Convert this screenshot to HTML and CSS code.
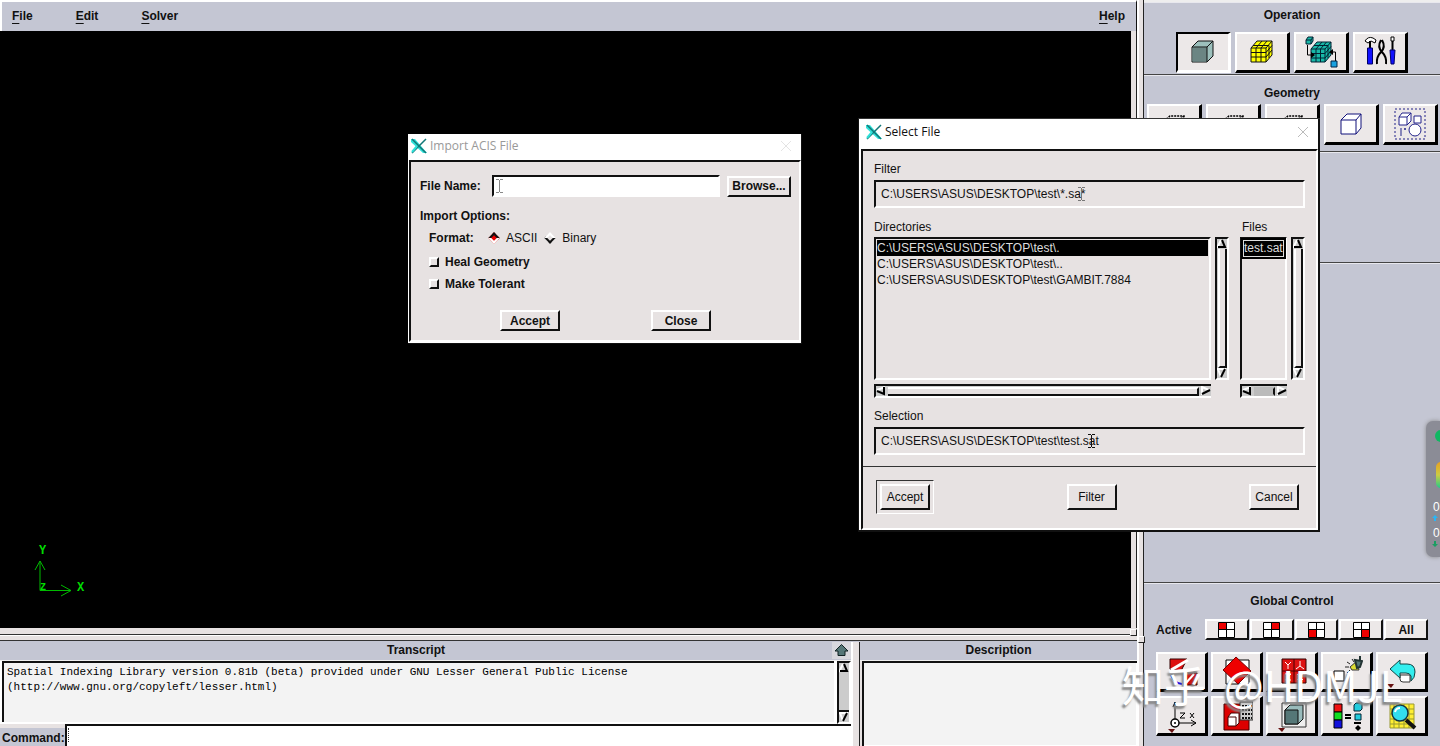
FILE: index.html
```
<!DOCTYPE html>
<html lang="en">
<head>
<meta charset="utf-8">
<title>GAMBIT</title>
<link rel="stylesheet" href="styles.css">
</head>
<body>
<svg class="defs" aria-hidden="true">
  <symbol id="up" viewBox="0 0 10 10"><path d="M0 9 4 1" stroke="#fff" stroke-width="2"/><path d="M5 1 8 8H1" fill="none" stroke="#000" stroke-width="2"/></symbol>
  <symbol id="down" viewBox="0 0 10 10"><path d="M0 1h9M1 1l3 8" fill="none" stroke="#fff" stroke-width="2"/><path d="M8 1 4 9" stroke="#000" stroke-width="2"/></symbol>
  <symbol id="left" viewBox="0 0 10 10"><path d="M9 1 1 4" stroke="#fff" stroke-width="2"/><path d="M8 1v7L1 5" fill="none" stroke="#000" stroke-width="2"/></symbol>
  <symbol id="right" viewBox="0 0 10 10"><path d="M1 9V1l7 3" fill="none" stroke="#fff" stroke-width="2"/><path d="M1 8 9 4" stroke="#000" stroke-width="2"/></symbol>
  <symbol id="logo" viewBox="0 0 16 16"><path d="M0 1h4l12 14h-4L0 4z" fill="#2fe0d8"/><path d="M1 1 15 15M15 1 1 15" stroke="#177" stroke-width="1.500"/><path d="M6 8 1 14" stroke="#2fe0d8" stroke-width="2"/></symbol>
  <symbol id="close" viewBox="0 0 10 10"><path d="m0 0 10 10M10 0 0 10" stroke="currentColor"/></symbol>
  <symbol id="beam" viewBox="0 0 7 14"><path d="M0 .5h3M4 .5h3M0 13.500h3M4 13.500h3M3.500 1v12" stroke="currentColor" fill="none"/></symbol>
  <symbol id="dashcube" viewBox="0 0 28 28"><path d="M4 11v14h14V11zl6-5h14v14l-6 5M18 11l6-5" fill="none" stroke="#000" stroke-width="1.500" stroke-dasharray="2 1"/></symbol>
  <symbol id="gridcube" viewBox="0 0 28 28"><path d="M3 10 9 3h15v14l-6 7H3z" stroke="#111"/><path d="M3 10h15v14M18 10l6-7M3 14.500h15l6-7M3 19h15l6-7M8 24V10l6-7M13 24V10l6-7M5 7.500h16V20" fill="none" stroke="#111"/></symbol>
</svg>
<div class="app">
  <main class="work">
    <nav class="menu" aria-label="Main menu">
      <button><u>F</u>ile</button><button><u>E</u>dit</button><button><u>S</u>olver</button><button class="help"><u>H</u>elp</button>
    </nav>
    <section class="view" aria-label="Graphics window">
      <div class="canvas">
        <svg class="axes" viewBox="0 0 60 56" aria-label="Axes">
          <path d="M8 49.500V20M3 29l5-9 5 9M8 49.500h31M29 44l10 5.500-10 5.500" fill="none" stroke="#0b0"/>
          <text x="7" y="13">Y</text><text x="8" y="49" class="z">Z</text><text x="45" y="50">X</text>
        </svg>
      </div>
    </section>
    <div class="hsash"><span class="grip"></span></div>
    <div class="bottom">
      <section class="console">
        <header><h2>Transcript</h2><button class="raise" aria-label="Raise transcript"><svg viewBox="0 0 14 12"><path d="M7 .5 13.500 7H10.500v4.500h-7V7H.5z" fill="#577" stroke="#122"/></svg></button></header>
        <div class="log">
          <pre>Spatial Indexing Library version 0.81b (beta) provided under GNU Lesser General Public License
(http://www.gnu.org/copyleft/lesser.html)</pre>
          <div class="vscroll plain"><svg><use href="#up"/></svg><i></i><svg><use href="#down"/></svg></div>
        </div>
        <div class="command"><label for="cmd">Command:</label><input id="cmd" type="text"><span class="caret"></span></div>
      </section>
      <div class="vsash"></div>
      <section class="description"><header><h2>Description</h2></header><div class="desc"></div></section>
    </div>
  </main>
  <div class="mainsash"><span class="grip"></span></div>
  <aside class="tools">
    <section class="operation">
      <h2>Operation</h2>
      <div class="row">
        <button class="tool pressed" aria-label="Geometry"><svg viewBox="0 0 28 28"><path d="M3 9 9 3h15v15l-6 6H3z" fill="#9cc0bc" stroke="#111"/><path d="M3.500 9.500H18v14H3.500z" fill="#6b8583"/><path d="M3 9h15v15M18 9l6-6" fill="none" stroke="#111"/></svg></button>
        <button class="tool" aria-label="Mesh"><svg fill="#ff0"><use href="#gridcube"/></svg></button>
        <button class="tool" aria-label="Zones"><svg viewBox="0 0 34 32" class="wide"><g fill="#18b8a8" stroke="#023"><path d="M2 4 4 1h5v4L7 8H2zM2 4h5v4M7 4l2-3"/><path d="M7 13 13 6h14v13l-6 7H7z"/><path d="M7 13h14v13M21 13l6-7M7 17.500h14l6-7M7 22h14l6-7M12 26V13l6-7M16.500 26V13l6-7M10 9.500h14V22" fill="none"/></g><path d="M3.500 9v10H8M31.500 25v-9H28" fill="none" stroke="#000"/><path d="M7 16l4 3-4 3zM29 13l-4 3 4 3z"/><path d="M27 25h6v6h-6z" fill="#18a0e0" stroke="#024"/></svg></button>
        <button class="tool" aria-label="Tools"><svg viewBox="0 0 34 34" class="wide"><path d="M2 6q3-5 8-3l3 2-1 3-4-2-3 2z" fill="#fff" stroke="#000"/><path d="M7 6v8M29.500 5v12" stroke="#000" stroke-width="2"/><path d="M28 2h3v4h-3z" fill="#fff" stroke="#000"/><path d="M4.500 13h5v16h-5zM27 15h5l-1 14h-3z" fill="#11f" stroke="#006"/><path d="M14 29q-1-7 4-12 5-5 1-12M23 29q1-7-4-12-5-5-1-12" fill="none" stroke="#000" stroke-width="2"/></svg></button>
      </div>
    </section>
    <section class="geometry">
      <h2>Geometry</h2>
      <div class="row">
        <button class="tool" aria-label="Vertex"><svg><use href="#dashcube"/></svg></button>
        <button class="tool" aria-label="Edge"><svg><use href="#dashcube"/></svg></button>
        <button class="tool" aria-label="Face"><svg><use href="#dashcube"/></svg></button>
        <button class="tool" aria-label="Volume"><svg viewBox="0 0 28 28"><path d="M4 10 10 4h14v14l-5 6H4zM4 10h15v14M19 10l5-6" fill="#fff" stroke="#11117a"/></svg></button>
        <button class="tool" aria-label="Group"><svg viewBox="0 0 34 34" class="wide"><path d="M2 2h30v30H2z" fill="none" stroke="#22228a" stroke-dasharray="2 2"/><g fill="#fff" stroke="#22228a"><path d="M6 10 9 6h9v8l-4 4H6zM6 10h8v8M14 10l4-4M21 9h7v7h-7z"/><circle cx="22" cy="23" r="6"/></g><path d="M8 21v8" stroke="#22228a"/><circle cx="12" cy="22" r="1" fill="#22228a"/></svg></button>
      </div>
    </section>
    <section class="blank"></section>
    <section class="form"></section>
    <section class="global">
      <h2>Global Control</h2>
      <div class="active">
        <span>Active</span>
        <button aria-label="Top left"><svg viewBox="0 0 17 16"><path d="M.5.5h16v15H.5z" fill="#fff"/><path d="M.5.5h8v7h-8z" fill="#e00"/><path d="M.5.5h16v15H.5zM8.500 0v16M0 7.500h17" fill="none" stroke="#000"/></svg></button>
        <button aria-label="Top right"><svg viewBox="0 0 17 16"><path d="M.5.5h16v15H.5z" fill="#fff"/><path d="M8.500.5h8v7h-8z" fill="#e00"/><path d="M.5.5h16v15H.5zM8.500 0v16M0 7.500h17" fill="none" stroke="#000"/></svg></button>
        <button aria-label="Bottom left"><svg viewBox="0 0 17 16"><path d="M.5.5h16v15H.5z" fill="#fff"/><path d="M.5 7.500h8v8h-8z" fill="#e00"/><path d="M.5.5h16v15H.5zM8.500 0v16M0 7.500h17" fill="none" stroke="#000"/></svg></button>
        <button aria-label="Bottom right"><svg viewBox="0 0 17 16"><path d="M.5.5h16v15H.5z" fill="#fff"/><path d="M8.500 7.500h8v8h-8z" fill="#e00"/><path d="M.5.5h16v15H.5zM8.500 0v16M0 7.500h17" fill="none" stroke="#000"/></svg></button>
        <button>All</button>
      </div>
      <div class="pad">
        <button aria-label="Fit to window"><svg viewBox="0 0 36 34"><path d="M8 4h17l-6 12-11-2z" fill="#d11" stroke="#300"/><path d="M9 15 26 5" stroke="#fff" stroke-width="3"/><path d="M9 20q3 8 11 9" stroke="#11d" stroke-width="2" fill="none"/><path d="M22 18h13v12H22z" fill="#c11" stroke="#300"/><path d="m24 28 8-9" stroke="#fff" stroke-width="2"/></svg></button>
        <button aria-label="Select pivot"><svg viewBox="0 0 36 34"><path d="M9 5h23v24H9z" fill="#fff" stroke="#000"/><path d="M19 2 34 16 21 29 6 15z" fill="#e00" stroke="#700"/></svg></button>
        <button aria-label="Select preset"><svg viewBox="0 0 36 34"><path d="M10 4h24v24H10z" fill="#d11" stroke="#300"/><path d="M22 4v24M10 16h24" stroke="#400"/><path d="m13 7 3 3 3-3M16 10v4M28 6v5l-4 3M28 11l4 3M13 19h6l-6 6h6M25 19l6 6M31 19l-6 6" stroke="#fff" fill="none"/></svg></button>
        <button aria-label="Annotate light"><svg viewBox="0 0 36 34"><path d="M7 16h10v10H7z" fill="#fff" stroke="#000"/><path d="m23 12 7-6 2 9h-7z" fill="#dd3" stroke="#333"/><path d="m28 5 7 1-2 6-3 1zM33 1v5" fill="#577" stroke="#233" stroke-width="2"/><path d="m20 7 3 2M18 12h4M25 4l2 3M20 18l3-3" stroke="#222"/></svg></button>
        <button aria-label="Undo"><svg viewBox="0 0 36 34"><path d="M18 20h10v7h-7q-3 0-3-3z" fill="#fff" stroke="#333"/><path d="m8 14 10-9v4h7q8 0 8 8 0 6-4 9v-5q-1-3-5-3h-6v5z" fill="#3ee" stroke="#144"/><path d="M5 29h7l-3 4z" fill="#611"/></svg></button>
        <button aria-label="Orient model"><svg viewBox="0 0 36 34"><path d="M13 22V3M11 8l2-5 2 5M17 24h17M29 21l5 3-5 3" fill="none" stroke="#000"/><circle cx="13" cy="24" r="4" fill="#fff" stroke="#000" stroke-width="1.500"/><circle cx="13" cy="24" r="1"/><path d="M18 14h5l-5 5h5M28 14l4 5M32 14l-4 5" fill="none" stroke="#000"/><path d="M6 30h7l-3 4z" fill="#611"/></svg></button>
        <button aria-label="Specify model display attributes"><svg viewBox="0 0 36 34"><path d="M7 5h25v26H7z" fill="#d00" stroke="#400"/><path d="M11 18 14 14h8v10l-3 3h-8zM11 18h8v9" fill="#fff" stroke="#400"/><path d="M23 3h13v18H23z" fill="#ccc" stroke="#333"/><path d="M25 7h10M25 11h10M25 15h10M25 19h10" stroke="#111" stroke-width="2" stroke-dasharray="2 1"/></svg></button>
        <button aria-label="Render model"><svg viewBox="0 0 36 34"><path d="M10 4h24v24H10z" fill="#eee" stroke="#333"/><path d="M13 11 18 6h13v14l-5 5H13z" fill="#9bb" stroke="#111"/><path d="M13 11h13v14H13z" fill="#577" stroke="#111"/><path d="M6 29h7l-3 4z" fill="#611"/></svg></button>
        <button aria-label="Specify color mode"><svg viewBox="0 0 36 34"><path d="M7 5h8v8H7z" fill="#e11" stroke="#000"/><path d="M7 13h8v8H7z" fill="#1d2" stroke="#000"/><path d="M7 21h8v8H7z" fill="#11d" stroke="#000"/><path d="M18 16h6M18 19h6M27 24h7" stroke="#000" stroke-width="2"/><path d="m27 6 2-2h6v6l-2 2h-6zM28 15h6v6h-6z" fill="#2cd" stroke="#023"/><path d="m31 26 3 3-3 3-3-3z"/></svg></button>
        <button aria-label="Examine mesh"><svg viewBox="0 0 36 34"><path d="M8 5h24v24H8z" fill="#fe3"/><path d="M8 5h24v24H8zM8 10h24M8 15h24M8 20h24M8 25h24M12 5v24M17 5v24M22 5v24M27 5v24" fill="none" stroke="#993"/><path d="m24 21 9 8" stroke="#111" stroke-width="4"/><circle cx="18" cy="14" r="8" fill="#3de" stroke="#134" stroke-width="1.500"/><path d="M13 13q1-4 5-4" stroke="#fff" stroke-width="2" fill="none"/></svg></button>
      </div>
    </section>
  </aside>
</div>

<form class="dialog import" aria-label="Import ACIS File">
  <div class="title"><svg class="logo"><use href="#logo"/></svg><span>Import ACIS File</span><button type="button" aria-label="Close window"><svg><use href="#close"/></svg></button></div>
  <div class="panel">
    <div class="filerow"><label for="fn">File Name:</label><span class="field"><input id="fn" type="text"><svg class="beam faint"><use href="#beam"/></svg></span><button type="button" class="btn">Browse...</button></div>
    <div class="options">Import Options:</div>
    <div class="format"><span>Format:</span><label><input type="radio" name="fmt" checked>ASCII</label><label><input type="radio" name="fmt">Binary</label></div>
    <label class="check"><input type="checkbox">Heal Geometry</label>
    <label class="check"><input type="checkbox">Make Tolerant</label>
    <div class="actions"><button type="button" class="btn">Accept</button><button type="button" class="btn">Close</button></div>
  </div>
</form>

<form class="dialog select" aria-label="Select File">
  <div class="title"><svg class="logo"><use href="#logo"/></svg><span>Select File</span><button type="button" aria-label="Close window"><svg><use href="#close"/></svg></button></div>
  <div class="panel">
    <div class="content">
      <label for="flt">Filter</label>
      <div class="field"><input id="flt" type="text" value="C:\USERS\ASUS\DESKTOP\test\*.sa*"><svg class="beam one"><use href="#beam"/></svg></div>
      <div class="lists">
        <div class="dirs">
          <span id="dl">Directories</span>
          <div class="pane"><ul role="listbox" aria-labelledby="dl"><li role="option" aria-selected="true">C:\USERS\ASUS\DESKTOP\test\.</li><li role="option">C:\USERS\ASUS\DESKTOP\test\..</li><li role="option">C:\USERS\ASUS\DESKTOP\test\GAMBIT.7884</li></ul><div class="vscroll"><svg><use href="#up"/></svg><i></i><svg><use href="#down"/></svg></div></div>
          <div class="hscroll"><svg><use href="#left"/></svg><i></i><svg><use href="#right"/></svg></div>
        </div>
        <div class="files">
          <span id="fl">Files</span>
          <div class="pane"><ul role="listbox" aria-labelledby="fl"><li role="option" aria-selected="true">test.sat</li></ul><div class="vscroll"><svg><use href="#up"/></svg><i></i><svg><use href="#down"/></svg></div></div>
          <div class="hscroll short"><svg><use href="#left"/></svg><i></i><svg><use href="#right"/></svg></div>
        </div>
      </div>
      <label for="sel">Selection</label>
      <div class="field"><input id="sel" type="text" value="C:\USERS\ASUS\DESKTOP\test\test.sat"><svg class="beam two"><use href="#beam"/></svg></div>
    </div>
    <div class="actions"><span class="default"><button type="button" class="btn">Accept</button></span><button type="button" class="btn">Filter</button><button type="button" class="btn">Cancel</button></div>
  </div>
</form>

<div class="monitor" aria-hidden="true">
  <b class="dot"></b><b class="gauge"></b>
  <span>0</span><svg viewBox="0 0 6 6"><path d="M3 0 6 3H4v3H2V3H0z" fill="#29b6f6"/></svg>
  <span>0</span><svg viewBox="0 0 6 6"><path d="M3 6 6 3H4V0H2v3H0z" fill="#1a9e62"/></svg>
</div>
<div class="watermark"><span>知乎</span><span>@HDMJL</span></div>
</body>
</html>
```
FILE: styles.css
```
:root { --steel: #c4c6d3; --face: #e7e2e2; --ink: #111; --light: #fff; --btn: #ece8e8; }
* { box-sizing: border-box; }
body { margin: 0; height: 100vh; overflow: hidden; position: relative; background: var(--face); color: var(--ink); font: 12px/16px "Liberation Sans", Arial, sans-serif; }
button, input { font: inherit; color: inherit; margin: 0; border-radius: 0; outline: 0; }
button { padding: 0; border: 0; background: none; display: flex; align-items: center; justify-content: center; }
h2 { margin: 0; font-size: 12px; line-height: 16px; text-align: center; }
svg { display: block; flex: none; }
.defs { position: absolute; width: 0; height: 0; }

.app { display: flex; height: 100%; }
.work { flex: 1; min-width: 0; display: flex; flex-direction: column; }
.menu { display: flex; gap: 43px; height: 31px; padding: 0 11px 2px 10px; background: var(--steel); border-top: 2px solid #fff; border-left: 2px solid #fff; border-right: 1px solid #111; font-weight: bold; }
.menu u { text-underline-offset: 3px; }
.menu .help { margin-left: auto; }
.view { flex: 1; padding-right: 6px; background: linear-gradient(#222, #222) right / 1px 100% no-repeat var(--face); }
.canvas { position: relative; height: 100%; background: #000; }
.axes { position: absolute; left: 32px; bottom: 31px; width: 60px; height: 56px; font: bold 12px "Liberation Mono", monospace; fill: #0d0; }
.axes .z { font-size: 10px; }
.hsash { position: relative; height: 14px; background: linear-gradient(var(--face) 6px, #333 6px 7px, #fff 7px 8px, var(--face) 8px 12px, #333 12px 13px, var(--steel) 13px); }
.grip { position: absolute; width: 7px; height: 7px; background: var(--face); border: 1px solid #fff; border-right-color: #222; border-bottom-color: #222; }
.hsash .grip { right: 0; top: 1px; }
.mainsash { position: relative; width: 7px; background: var(--face); border-left: 2px solid #fff; border-right: 1px solid #222; }
.mainsash .grip { left: -1px; bottom: 103px; }

.bottom { display: flex; height: 104px; }
.bottom header { display: flex; align-items: center; height: 19px; padding-bottom: 2px; background: var(--steel); border-bottom: 1px solid #eee; }
.bottom h2 { flex: 1; }
.console { flex: 1; min-width: 0; display: flex; flex-direction: column; }
.raise { width: 19px; height: 18px; background: #d8d8dd; }
.raise svg { width: 15px; height: 12px; }
.log { flex: 1; display: flex; padding-left: 2px; background: #fff; }
.log pre { flex: 1; margin: 0 3px 2px 0; padding: 2px 3px; background: #f3f3f3; border: solid #111; border-width: 2px 0 0 2px; font: 11px/15px "Liberation Mono", monospace; color: #000; }
.command { position: relative; display: flex; height: 22px; }
.command label { width: 65px; padding: 2px 0 0 2px; background: var(--steel); border-top: 4px solid var(--face); font-weight: bold; }
.command input { flex: 1; min-width: 0; padding: 0 4px; background: #fff; border: solid #111; border-width: 2px 0 0 2px; }
.caret { position: absolute; left: 68px; top: 4px; height: 14px; border-left: 1px dotted #333; }
.vsash { width: 9px; background: var(--face); border-left: 2px solid #fff; border-right: 1px solid #222; }
.description { width: 277px; display: flex; flex-direction: column; }
.desc { flex: 1; margin-left: 2px; background: #f3f3f3; border: solid #111; border-width: 2px 0 0 2px; box-shadow: inset -1px -1px #fff; }

.vscroll { width: 14px; display: flex; flex-direction: column; align-items: center; background: #ccc; border: solid #111; border-width: 2px 0 0 2px; border-right: 2px solid #fff; border-bottom: 2px solid #fff; }
.vscroll svg, .hscroll svg { width: 10px; height: 10px; }
.vscroll i { flex: 1; width: 9px; background: var(--face); border: solid #111; border-width: 0 2px 2px 0; border-left: 2px solid #fff; }
.vscroll.plain i { width: 10px; background: #ccc; border-left: 0; border-right: 0; }
.hscroll { height: 14px; display: flex; align-items: center; background: #ccc; border: solid #111; border-width: 2px 0 0 2px; border-bottom: 2px solid #fff; }
.hscroll i { flex: 1; height: 9px; margin: 0 2px; background: var(--face); border: solid #111; border-width: 0 2px 2px 0; border-top: 2px solid #fff; }
.hscroll.short i { background: #bbb; border-bottom-color: #bbb; border-top-color: #bbb; }

.tools { width: 296px; display: flex; flex-direction: column; background: var(--steel); border-top: 2px solid #eee; }
.tools section { border-bottom: 1px solid #444; box-shadow: inset 0 1px #e8e8ee; }
.operation { height: 73px; padding-top: 5px; }
.operation .row { margin-top: 9px; }
.geometry { height: 77px; padding-top: 10px; }
.geometry .row { margin-top: 3px; }
.row { display: flex; justify-content: center; gap: 4px; }
.tool { width: 55px; height: 41px; background: var(--btn); border: solid #000; border-width: 2px 3px 3px 2px; border-top-color: #fff; border-left-color: #fff; }
.tool.pressed { border-color: #fff; border-top-color: #000; border-left-color: #000; }
.tool svg { width: 28px; height: 28px; }
.tool .wide { width: 34px; height: 34px; }
.blank { height: 111px; }
.form { flex: 1; }
.tools .global { border-bottom: 0; padding: 10px 12px 10px; }
.active { display: flex; gap: 1px; align-items: center; margin-top: 10px; font-weight: bold; }
.active span { width: 48px; }
.active button { width: 44px; height: 21px; background: var(--btn); border: solid #111; border-width: 2px; border-top-color: #fff; border-left-color: #fff; font-weight: bold; }
.active svg { width: 17px; height: 16px; }
.pad { display: grid; grid-template-columns: repeat(5, 52px); gap: 4px 3px; margin-top: 12px; }
.pad button { height: 40px; background: var(--btn); border: solid #000; border-width: 2px 3px 3px 2px; border-top-color: #fff; border-left-color: #fff; padding-right: 4px; }
.pad svg { width: 36px; height: 34px; }

.dialog { position: absolute; background: #fff; }
.title { display: flex; align-items: center; gap: 3px; font: 12px/16px "Open Sans", sans-serif; }
.title button { margin-left: auto; color: #bbb; }
.title button svg { width: 10px; height: 10px; }
.logo { width: 16px; height: 16px; }
.panel { background: var(--face); border: 2px solid #fff; border-top-color: #111; border-left-color: #111; }
.btn { height: 21px; background: var(--face); border: 2px solid #111; border-top-color: #fff; border-left-color: #fff; }
.dialog input[type=text] { width: 100%; padding: 0 5px; background: none; border: 2px solid #fff; border-top-color: #111; border-left-color: #111; }
.field { position: relative; }
.beam { position: absolute; width: 7px; height: 14px; color: #111; }
.faint { left: 4px; top: 4px; color: #888; }
.one { left: 204px; top: 7px; color: #777; }
.two { left: 214px; top: 7px; }

.import { left: 408px; top: 134px; width: 394px; font-weight: bold; box-shadow: inset -1px -1px #111; padding: 0 1px 1px 0; }
.import .title { height: 26px; padding: 0 10px 2px 3px; color: #999; }
.import .title button { color: #e4e4e4; }
.import .panel { margin: 0 0 1px 1px; padding: 13px 8px 9px 9px; }
.filerow { display: flex; align-items: center; }
.filerow label { width: 72px; }
.filerow .field { flex: 1; }
.import .filerow input { display: block; height: 22px; background: #fff; }
.filerow .btn { width: 64px; margin-left: 7px; font-weight: bold; }
.options { margin-top: 11px; }
.format { display: flex; align-items: center; margin: 6px 0 0 9px; }
.format span { width: 61px; }
.format label { display: flex; align-items: center; gap: 8px; margin-right: 9px; font-weight: normal; }
input[type=radio] { appearance: none; width: 8px; height: 8px; border: 2px solid #111; border-top-color: #fff; border-left-color: #fff; transform: rotate(45deg); }
input[type=radio]:checked { background: #e00; border-color: #111 #fff #fff #111; }
.check { display: flex; align-items: center; gap: 6px; margin: 8px 0 6px 9px; height: 16px; }
input[type=checkbox] { appearance: none; width: 10px; height: 10px; border: 2px solid #111; border-top-color: #fff; border-left-color: #fff; }
.import .check + .check { margin-top: 6px; }
.import .actions { display: flex; justify-content: space-between; margin: 18px 80px 0; }
.import .actions .btn { width: 60px; font-weight: bold; }

.select { left: 858px; top: 118px; width: 462px; box-shadow: inset -2px -2px #111; padding: 0 2px 2px 0; border-left: 1px solid #111; border-top: 1px solid #333; }
.select .title { height: 30px; padding: 0 10px 4px 7px; }
.select .panel { margin-left: 2px; }
.content { padding: 10px 11px 11px; border-bottom: 1px solid #333; }
.content > label, .lists span { display: block; height: 16px; }
.content .field { margin-top: 3px; }
.content input { display: block; height: 28px; }
.lists { display: flex; gap: 11px; margin: 11px 0 10px; }
.dirs { flex: 1; }
.files { width: 65px; }
.files span { padding-left: 2px; }
.lists span { margin-bottom: 2px; }
.lists .pane { display: flex; height: 143px; gap: 4px; }
.lists ul { flex: 1; min-width: 0; margin: 0; padding: 1px; list-style: none; border: 2px solid #fff; border-top-color: #111; border-left-color: #111; white-space: nowrap; }
.lists li { height: 16px; line-height: 16px; }
.lists li[aria-selected] { background: #000; color: #ddd; }
.files li[aria-selected] { height: 17px; border: 1px solid #ddd; outline: 2px solid #000; line-height: 15px; }
.lists .hscroll { margin: 4px 18px 0 0; }
.select .actions { display: flex; align-items: center; justify-content: space-between; padding: 13px 17px 14px 13px; }
.select .btn { width: 50px; height: 26px; }
.default { padding: 3px; border: 1px solid #fff; border-top-color: #333; border-left-color: #333; }

.monitor { position: absolute; left: 1426px; top: 421px; width: 14px; height: 136px; padding-left: 6px; overflow: hidden; border-radius: 7px 0 0 7px; background: #8b8c96; box-shadow: 0 0 4px #888; color: #fff; }
.dot { display: block; width: 12px; height: 12px; margin: 9px 0 20px 3px; border-radius: 50%; background: #10b862; }
.gauge { display: block; width: 10px; height: 26px; margin: 0 0 11px 4px; border-radius: 6px; background: linear-gradient(#e8a020, #cc4, #2c8); }
.monitor span { display: block; height: 16px; padding-left: 1px; }
.monitor svg { width: 6px; height: 6px; margin-bottom: 4px; }
.watermark { position: absolute; left: 1122px; top: 656px; display: flex; gap: 18px; font: 42px/56px "Noto Sans CJK SC", sans-serif; color: #fff; text-shadow: -2px 3px 2px #888; white-space: nowrap; pointer-events: none; }
```
